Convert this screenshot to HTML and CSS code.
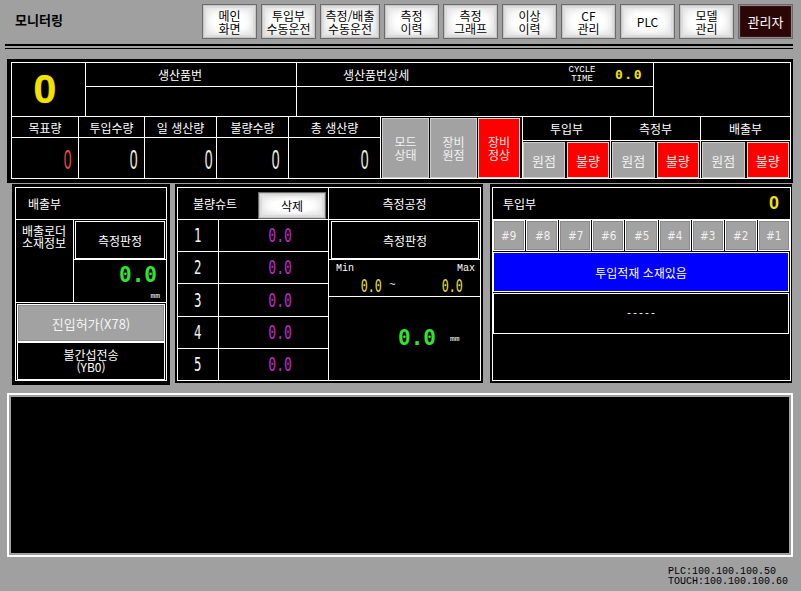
FILE: index.html
```html
<!DOCTYPE html>
<html lang="ko">
<head>
<meta charset="utf-8">
<title>모니터링</title>
<link rel="stylesheet" href="styles.css">
</head>
<body>
<header class="topbar">
  <h1 class="title">모니터링</h1>
  <nav class="nav">
    <button class="nbtn">메인<br>화면</button>
    <button class="nbtn">투입부<br>수동운전</button>
    <button class="nbtn wide">측정/배출<br>수동운전</button>
    <button class="nbtn">측정<br>이력</button>
    <button class="nbtn">측정<br>그래프</button>
    <button class="nbtn">이상<br>이력</button>
    <button class="nbtn">CF<br>관리</button>
    <button class="nbtn">PLC</button>
    <button class="nbtn">모델<br>관리</button>
    <button class="nbtn admin">관리자</button>
  </nav>
</header>
<div class="rule-thick"></div>
<div class="rule-thin"></div>

<section class="ptop">
  <div class="ptop-in">
    <div class="pgrid1">
      <div class="cell bigzero">0</div>
      <div class="cell hd hd-num">생산품번</div>
      <div class="cell hd hd-detail">
        <span class="hd-detail-label">생산품번상세</span>
        <span class="cycle-label">CYCLE<br>TIME</span>
        <span class="cycle-val">0.0</span>
      </div>
      <div class="cell blank-tall"></div>
      <div class="cell"></div>
      <div class="cell"></div>
    </div>
    <div class="pbottom">
      <div class="stats">
        <div class="cell sh">목표량</div>
        <div class="cell sh">투입수량</div>
        <div class="cell sh">일 생산량</div>
        <div class="cell sh">불량수량</div>
        <div class="cell sh">총 생산량</div>
        <div class="cell sv"><span class="cnt red">0</span></div>
        <div class="cell sv"><span class="cnt">0</span></div>
        <div class="cell sv sv-b"><span class="cnt">0</span></div>
        <div class="cell sv sv-c"><span class="cnt">0</span></div>
        <div class="cell sv sv-d"><span class="cnt">0</span></div>
      </div>
      <div class="modes">
        <div class="mbtn gray">모드<br>상태</div>
        <div class="mbtn gray">장비<br>원점</div>
        <div class="mbtn redb narrow">장비<br>정상</div>
      </div>
      <div class="group g1">
        <div class="g-head">투입부</div>
        <div class="g-btns"><div class="gbtn gray">원점</div><div class="gbtn redb">불량</div></div>
      </div>
      <div class="group g2">
        <div class="g-head">측정부</div>
        <div class="g-btns"><div class="gbtn gray">원점</div><div class="gbtn redb">불량</div></div>
      </div>
      <div class="group g2">
        <div class="g-head">배출부</div>
        <div class="g-btns"><div class="gbtn gray">원점</div><div class="gbtn redb">불량</div></div>
      </div>
    </div>
  </div>
</section>

<div class="mid">
  <section class="box box-out">
    <div class="frame col">
      <div class="f-head">배출부</div>
      <div class="out-info">
        <div class="out-label">배출로더<br>소재정보</div>
        <div class="out-right">
          <div class="judge-wrap"><div class="judge">측정판정</div></div>
          <div class="out-val"><span class="green">0.0</span><span class="mm">mm</span></div>
        </div>
      </div>
      <div class="enter-btn">진입허가(X78)</div>
      <div class="send-box">불간섭전송<br>(YB0)</div>
    </div>
  </section>

  <section class="box box-mid">
    <div class="frame row">
      <div class="chute">
        <div class="chute-head"><span>불량슈트</span><button class="del-btn">삭제</button></div>
        <div class="chute-row"><div class="chute-no"><span class="dig">1</span></div><div class="chute-val"><span class="dig mag">0.0</span></div></div>
        <div class="chute-row"><div class="chute-no"><span class="dig">2</span></div><div class="chute-val"><span class="dig mag">0.0</span></div></div>
        <div class="chute-row"><div class="chute-no"><span class="dig">3</span></div><div class="chute-val"><span class="dig mag">0.0</span></div></div>
        <div class="chute-row"><div class="chute-no"><span class="dig">4</span></div><div class="chute-val"><span class="dig mag">0.0</span></div></div>
        <div class="chute-row last"><div class="chute-no"><span class="dig">5</span></div><div class="chute-val"><span class="dig mag">0.0</span></div></div>
      </div>
      <div class="meas">
        <div class="meas-head">측정공정</div>
        <div class="judge-wrap jw2"><div class="judge">측정판정</div></div>
        <div class="range">
          <div class="range-labels"><span>Min</span><span>Max</span></div>
          <div class="range-vals">
            <span class="rv"><span class="dig yel">0.0</span></span>
            <span class="tilde">~</span>
            <span class="rv rv-max"><span class="dig yel">0.0</span></span>
          </div>
        </div>
        <div class="big"><span class="green">0.0</span><span class="mm mm-big">mm</span></div>
      </div>
    </div>
  </section>

  <section class="box box-in">
    <div class="frame col">
      <div class="in-head"><span>투입부</span><span class="yzero">0</span></div>
      <div class="slots">
        <div class="slot"><span class="hash">#9</span></div>
        <div class="slot"><span class="hash">#8</span></div>
        <div class="slot"><span class="hash">#7</span></div>
        <div class="slot"><span class="hash">#6</span></div>
        <div class="slot"><span class="hash">#5</span></div>
        <div class="slot"><span class="hash">#4</span></div>
        <div class="slot"><span class="hash">#3</span></div>
        <div class="slot"><span class="hash">#2</span></div>
        <div class="slot"><span class="hash">#1</span></div>
      </div>
      <div class="blue">투입적재 소재있음</div>
      <div class="dash">-----</div>
    </div>
  </section>
</div>

<section class="log"><div class="log-in"></div></section>

<footer class="ip">PLC:100.100.100.50<br>TOUCH:100.100.100.60</footer>
</body>
</html>
```
FILE: styles.css
```css
* { box-sizing: border-box; }

body {
  margin: 0;
  width: 801px;
  height: 591px;
  overflow: hidden;
  background: #a0a0a0;
  color: #fff;
  font-family: "Noto Sans CJK KR", "Noto Sans", sans-serif;
  font-size: 12px;
}

/* ---------- top bar ---------- */
.topbar {
  display: flex;
  height: 44px;
  align-items: flex-start;
}
.title {
  margin: 0;
  padding: 13px 0 0 15px;
  font-size: 13px;
  line-height: 14px;
  font-weight: bold;
  color: #000;
}
.nav {
  display: flex;
  gap: 4px;
  margin-left: auto;
  margin-right: 8px;
  padding-top: 4px;
}
.nbtn {
  width: 55px;
  height: 35px;
  padding: 0;
  border: 1px solid #6a6a6a;
  background: radial-gradient(ellipse at center, #ffffff 40%, #ececec 75%, #d4d4d4 100%);
  box-shadow: inset 0 0 0 1px #c4c4c4, inset 0 0 0 3px #dcdcdc, inset 0 0 5px 4px #e4e4e4;
  color: #000;
  font-family: "Noto Sans CJK KR", sans-serif;
  font-size: 12px;
  line-height: 13px;
}
.nbtn.wide { width: 60px; }
.nbtn.admin {
  background: #2c0606;
  box-shadow: inset 0 0 0 1px #8a8a8a, inset 0 0 0 2px #3a1010;
  color: #fff;
  font-size: 13px;
}

.rule-thick {
  margin-left: 5px;
  width: 788px;
  height: 2px;
  background: #000;
}
.rule-thin {
  margin: 2px 0 0 5px;
  width: 788px;
  height: 1px;
  background: #000;
}

/* ---------- top panel ---------- */
.ptop {
  margin: 10px 0 0 7px;
  width: 786px;
  height: 124px;
  padding: 3px 2px 4px 4px;
  background: #000;
}
.ptop-in {
  height: 117px;
  padding: 1px;
  background: #fff;
  display: flex;
  flex-direction: column;
  gap: 1px;
}
.cell {
  background: #000;
  display: flex;
  align-items: center;
  justify-content: center;
}
.pgrid1 {
  display: grid;
  grid-template-columns: 73px 210px 356px 136px;
  grid-template-rows: 23px 29px;
  gap: 1px;
}
.bigzero {
  grid-row: 1 / span 2;
  font-family: "Liberation Sans", sans-serif;
  font-weight: bold;
  font-size: 41px;
  color: #f2e200;
  padding-right: 7px;
  text-shadow: 0 0 1px #a09000;
}
.blank-tall {
  grid-column: 4;
  grid-row: 1 / span 2;
}
.hd { font-size: 12px; }
.hd-num {
  justify-content: flex-start;
  padding-left: 72px;
}
.hd-detail {
  justify-content: flex-start;
  padding-left: 46px;
}
.hd-detail-label { width: 224px; }
.cycle-label {
  width: 30px;
  text-align: center;
  font-family: "Liberation Mono", monospace;
  font-size: 9px;
  line-height: 9px;
  margin-right: 18px;
}
.cycle-val {
  font-family: "DejaVu Sans Mono", monospace;
  font-weight: bold;
  font-size: 13px;
  letter-spacing: 1.5px;
  color: #f2e200;
}

.pbottom {
  display: flex;
  gap: 1px;
  height: 61px;
}
.stats {
  display: grid;
  grid-template-columns: 66px 65px 71px 71px 91px;
  grid-template-rows: 20px 40px;
  gap: 1px;
}
.sh { font-size: 12px; }
.sv {
  justify-content: flex-end;
  padding-right: 9px;
}
.sv-b { padding-right: 6px; }
.sv-c { padding-right: 11px; }
.sv-d { padding-right: 14px; }
.cnt {
  display: inline-block;
  font-family: "Liberation Sans", sans-serif;
  font-size: 28px;
  line-height: 28px;
  color: #ecece0;
  transform: scaleX(0.5);
  transform-origin: right center;
  margin-right: -3px;
  margin-top: 4px;
}
.cnt.red { color: #e84a4a; }

.modes {
  width: 141px;
  background: #000;
  display: flex;
  gap: 1px;
  padding: 1px 0 0 1px;
}
.mbtn {
  width: 47px;
  height: 60px;
  display: flex;
  align-items: center;
  justify-content: center;
  text-align: center;
  font-size: 12px;
  line-height: 13px;
}
.mbtn.narrow { width: 42px; }
.gray {
  background: #a2a2a2;
  border: 1px solid #cfcfcf;
  color: #f2f2f2;
}
.redb {
  background: #ff0000;
  border: 1px solid #ffd0d0;
  color: #ffe6e6;
}
.group {
  width: 87px;
  display: flex;
  flex-direction: column;
  gap: 1px;
}
.group.g2 { width: 89px; }
.g-head {
  height: 23px;
  background: #000;
  display: flex;
  align-items: center;
  justify-content: center;
  font-size: 12px;
}
.g-btns {
  flex: 1;
  background: #000;
  display: flex;
  gap: 2px;
  padding: 1px 1px 0 0;
}
.g2 .g-btns { padding-left: 1px; }
.gbtn {
  flex: 1;
  display: flex;
  align-items: center;
  justify-content: center;
  font-size: 13px;
}

/* ---------- middle row ---------- */
.mid {
  display: flex;
  align-items: flex-start;
  margin-top: 1px;
}
.box { background: #000; }
.box-out {
  margin-left: 12px;
  width: 158px;
  height: 201px;
  padding: 3px 3px 4px 3px;
}
.box-mid {
  margin-left: 5px;
  width: 308px;
  height: 199px;
  padding: 3px 2px 2px 2px;
}
.box-in {
  margin-left: 7px;
  width: 302px;
  height: 199px;
  padding: 3px 1px 2px 2px;
}
.frame {
  height: 100%;
  border: 1px solid #fff;
  display: flex;
}
.frame.col { flex-direction: column; }
.frame.row { flex-direction: row; }

.f-head {
  height: 32px;
  border-bottom: 1px solid #fff;
  display: flex;
  align-items: center;
  padding-left: 12px;
}
.out-info {
  height: 83px;
  border-bottom: 1px solid #fff;
  display: flex;
}
.out-label {
  width: 58px;
  border-right: 1px solid #fff;
  padding: 5px 0 0 6px;
  line-height: 12px;
}
.out-right {
  flex: 1;
  display: flex;
  flex-direction: column;
}
.judge-wrap {
  height: 40px;
  padding: 1px 1px 0 1px;
  border-bottom: 1px solid #fff;
}
.judge-wrap.jw2 { padding-left: 2px; }
.judge {
  height: 38px;
  border: 1px solid #fff;
  display: flex;
  align-items: center;
  justify-content: center;
  font-size: 12px;
}
.out-val {
  flex: 1;
  display: flex;
  flex-direction: column;
  align-items: flex-end;
  padding: 5px 6px 0 0;
}
.out-val .green { margin-right: 3px; }
.green {
  font-family: "DejaVu Sans Mono", monospace;
  font-weight: bold;
  font-size: 21px;
  line-height: 21px;
  color: #33e233;
}
.mm {
  font-family: "Liberation Mono", monospace;
  font-size: 8px;
  line-height: 8px;
  margin-top: 6px;
  color: #fff;
}
.enter-btn {
  margin: 1px 1px 0;
  height: 38px;
  border: 1px solid #fff;
  background: #a2a2a2;
  box-shadow: inset 0 0 0 1px #8c8c8c;
  color: #f4f4f4;
  display: flex;
  align-items: center;
  justify-content: center;
  font-size: 13px;
}
.send-box {
  margin: 0 1px;
  height: 38px;
  border: 1px solid #fff;
  display: flex;
  align-items: center;
  justify-content: center;
  text-align: center;
  line-height: 12px;
  font-size: 12px;
}

.chute {
  width: 151px;
  border-right: 1px solid #fff;
  display: flex;
  flex-direction: column;
}
.chute-head {
  height: 32px;
  border-bottom: 1px solid #fff;
  display: flex;
  align-items: center;
  padding-left: 15px;
}
.del-btn {
  margin-left: auto;
  margin-right: 2px;
  align-self: flex-end;
  width: 68px;
  height: 27px;
  padding: 0;
  border: 1px solid #6a6a6a;
  background: radial-gradient(ellipse at center, #ffffff 40%, #ececec 75%, #d4d4d4 100%);
  box-shadow: inset 0 0 0 1px #c4c4c4, inset 0 0 0 3px #dcdcdc, inset 0 0 5px 4px #e4e4e4;
  color: #000;
  font-family: "Noto Sans CJK KR", sans-serif;
  font-size: 12px;
}
.chute-row {
  flex: 1;
  display: flex;
  border-bottom: 1px solid #fff;
}
.chute-row.last { border-bottom: 0; }
.chute-no {
  width: 41px;
  border-right: 1px solid #fff;
  display: flex;
  align-items: center;
  justify-content: center;
}
.chute-val {
  flex: 1;
  display: flex;
  align-items: center;
  justify-content: center;
  padding-left: 14px;
}
.dig {
  display: inline-block;
  font-family: "DejaVu Sans Mono", monospace;
  font-size: 19px;
  line-height: 19px;
  transform: scaleX(0.65);
  color: #f4f4f4;
}
.dig.mag { color: #c428c4; font-size: 20px; }
.dig.yel { color: #e8e040; font-size: 18px; }

.meas {
  flex: 1;
  display: flex;
  flex-direction: column;
}
.meas-head {
  height: 32px;
  border-bottom: 1px solid #fff;
  display: flex;
  align-items: center;
  justify-content: center;
}
.range {
  height: 37px;
  border-bottom: 1px solid #fff;
}
.range-labels {
  display: flex;
  justify-content: space-between;
  padding: 4px 5px 0 7px;
  font-family: "Liberation Mono", monospace;
  font-size: 10px;
  line-height: 10px;
}
.range-vals {
  display: flex;
  align-items: center;
  height: 18px;
  margin-top: 2px;
}
.rv {
  width: 33px;
  display: flex;
  justify-content: center;
  margin-left: 26px;
}
.tilde {
  margin-left: 1px;
  font-family: "Liberation Mono", monospace;
  font-size: 11px;
  color: #f2f2f2;
}
.rv-max { margin-left: auto; margin-right: 11px; }
.big {
  flex: 1;
  display: flex;
  align-items: center;
  padding-left: 69px;
}
.mm-big { margin: 0 0 0 14px; }

.in-head {
  height: 32px;
  border-bottom: 1px solid #fff;
  display: flex;
  align-items: center;
  justify-content: space-between;
  padding: 0 11px 0 10px;
}
.yzero {
  font-family: "Liberation Sans", sans-serif;
  font-weight: bold;
  font-size: 18px;
  color: #f2e200;
}
.slots {
  display: flex;
  gap: 1px;
  height: 31px;
}
.slot {
  flex: 1;
  border: 1px solid #fff;
  background: #a2a2a2;
  box-shadow: inset 0 0 0 1px #8a8a8a;
  display: flex;
  align-items: center;
  justify-content: center;
}
.hash {
  display: inline-block;
  font-family: "DejaVu Sans", sans-serif;
  font-size: 13px;
  transform: scaleX(0.8);
  color: #f0f0f0;
}
.blue {
  margin: 1px 1px 0 0;
  height: 40px;
  border: 1px solid #fff;
  background: #0000ff;
  display: flex;
  align-items: center;
  justify-content: center;
  font-size: 12px;
}
.dash {
  margin: 1px 1px 0 0;
  height: 41px;
  border: 1px solid #fff;
  display: flex;
  align-items: center;
  justify-content: center;
  font-family: "Liberation Mono", monospace;
  font-size: 10px;
}

/* ---------- log ---------- */
.log {
  margin: 8px 0 0 7px;
  width: 786px;
  height: 164px;
  border: 2px solid #fff;
  padding: 2px;
  background: #a0a0a0;
}
.log-in {
  height: 100%;
  background: #000;
}

.ip {
  margin: 10px 0 0 668px;
  font-family: "Liberation Mono", monospace;
  font-size: 10px;
  line-height: 10px;
  color: #000;
}
```
